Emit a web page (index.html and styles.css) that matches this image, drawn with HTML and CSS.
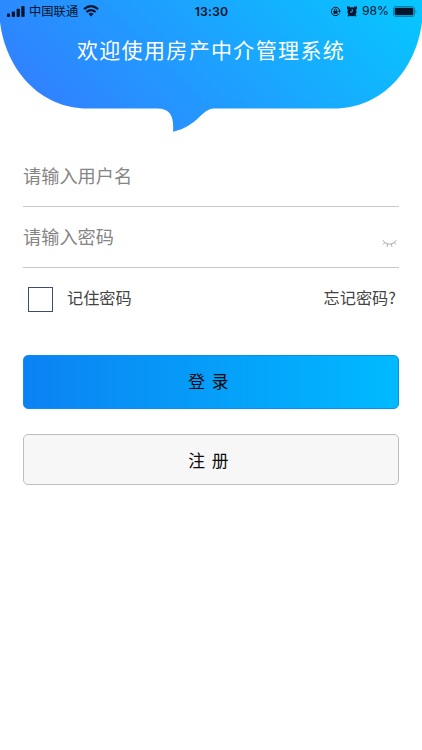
FILE: index.html
```html
<!DOCTYPE html>
<html lang="zh-CN">
<head>
<meta charset="utf-8">
<title>登录</title>
<link rel="stylesheet" href="styles.css">
</head>
<body>
<header class="hero">
  <svg class="hero-bg" width="422" height="132" viewBox="0 0 422 132" aria-hidden="true">
    <defs>
      <linearGradient id="sky" gradientUnits="userSpaceOnUse" x1="98" y1="154" x2="324" y2="-72">
        <stop offset="0" stop-color="#3082ff"/>
        <stop offset="1" stop-color="#08c4ff"/>
      </linearGradient>
    </defs>
    <path fill="url(#sky)" d="M0 0H422V22C416 70 382 108.5 334 108.5H214C202 108.5 198 126 173 131.8C174 117 171 108.5 157 108.5H88C40 108.5 6 70 0 22Z"/>
  </svg>
  <div class="status">
    <div class="status-left">
      <svg width="18" height="11" viewBox="0 0 18 11"><rect x="0" y="7.5" width="3" height="3.5" rx=".8"/><rect x="4.8" y="5.5" width="3.2" height="5.5" rx=".8"/><rect x="9.6" y="2.8" width="3.2" height="8.2" rx=".8"/><rect x="14.3" y="0" width="3.3" height="11" rx=".8"/></svg>
      <span class="carrier">中国联通</span>
      <svg width="16" height="12" viewBox="0 0 16 12" fill="none" stroke="#05152b" stroke-width="2.2"><path d="M1 4.2Q8-1.8 15 4.2M3.4 7Q8 3.1 12.6 7"/><path d="M5.5 8.9Q8 6.8 10.5 8.9L8 11.6Z" fill="#05152b" stroke="none"/></svg>
    </div>
    <div class="time">13:30</div>
    <div class="status-right">
      <svg width="11" height="11" viewBox="0 0 11 11"><path d="M9.2 7.5A4.2 4.2 0 1 1 9.7 5" fill="none" stroke="#05152b"/><path d="M8 4.8H11L9.5 6.8Z"/><rect x="3.5" y="4.8" width="4" height="3" rx=".4"/><path d="M4.4 5V4a1.1 1.1 0 0 1 2.2 0v1" fill="none" stroke="#05152b" stroke-width=".8"/></svg>
      <svg class="alarm" width="10" height="11" viewBox="0 0 10 11"><circle cx="5" cy="5.7" r="4.5"/><path d="M.8 3.2V1.3H2.8M9.2 3.2V1.3H7.2M2 9L1.2 10.2M8 9l.8 1.2" stroke="#05152b" stroke-width="1.8"/><path d="M5.2 3V6.1H3" fill="none" stroke="#2bb5ff" stroke-width=".9"/></svg>
      <span class="percent">98%</span>
      <svg width="24" height="11" viewBox="0 0 24 11"><rect x=".5" y=".5" width="21" height="10" rx="2.5" fill="none" stroke="#087eac"/><rect x="1.7" y="1.7" width="18.6" height="7.6" rx="1.2"/><path d="M22.6 3.8Q24.1 5.5 22.6 7.2Z" fill="#087eac"/></svg>
    </div>
  </div>
  <h1 class="title">欢迎使用房产中介管理系统</h1>
</header>
<main class="form">
  <div class="field">请输入用户名</div>
  <div class="field">
    <span>请输入密码</span>
    <svg class="eye" width="15" height="10" viewBox="0 0 15 10" fill="none" stroke="#aaa"><path d="M.8 1.2C3.5 6.4 11.5 6.4 14.2 1.2M2.7 3.6L1.2 5.5M5.7 5L5 7.8M9.3 5l.7 2.8M12.3 3.6l1.5 1.9"/></svg>
  </div>
  <div class="options">
    <label class="remember"><span class="box"></span><span class="label">记住密码</span></label>
    <span class="label">忘记密码?</span>
  </div>
  <button class="btn login">登 录</button>
  <button class="btn register">注 册</button>
</main>
</body>
</html>
```
FILE: styles.css
```css
* { box-sizing: border-box; }
body {
  margin: 0;
  height: 750px;
  background: #fff;
  font-family: "Noto Sans CJK SC", sans-serif;
  overflow: hidden;
}
svg { display: block; flex: none; }
.hero { position: relative; height: 145px; }
.hero-bg { position: absolute; inset: 0; }
.status {
  position: relative;
  display: grid;
  grid-template-columns: 1fr auto 1fr;
  align-items: center;
  height: 22px;
  padding: 0 6px 0 7px;
  color: #05152b;
  fill: #05152b;
  line-height: 22px;
}
.status-left, .status-right { display: flex; align-items: center; }
.status-left { padding-bottom: 1px; }
.status-right { justify-content: flex-end; margin-right: -1px; padding-bottom: 1px; }
.carrier { margin: 0 5px 0 4px; font-size: 12.3px; }
.time { font: 600 12.3px/22px Inter, sans-serif; letter-spacing: .1px; }
.alarm { margin: 0 5px 0 6px; }
.percent { margin-right: 4px; font: 12.2px/22px Inter, sans-serif; }
.title {
  position: relative;
  margin: 11px 0 0;
  color: #fff;
  font-size: 21px;
  font-weight: 400;
  line-height: 32px;
  letter-spacing: 1.35px;
  text-align: center;
}
.form { padding: 0 23px; }
.field {
  display: flex;
  align-items: center;
  justify-content: space-between;
  height: 61px;
  padding-bottom: 2px;
  border-bottom: 1px solid #c8c8c8;
  color: #858585;
  font-size: 18.2px;
}
.field:first-child { height: 62px; }
.eye { margin: 15px 2px 0 0; }
.options {
  display: flex;
  justify-content: space-between;
  align-items: center;
  height: 62px;
  padding: 0 3px 0 5px;
  color: #444;
  font-size: 16.2px;
}
.label { padding-bottom: 4px; }
.remember { display: flex; align-items: center; }
.box { width: 25px; height: 25px; margin: 1px 14px 0 0; border: 1px solid #3d4d6b; }
.btn {
  display: block;
  width: 100%;
  padding: 0 5px 2px 0;
  border-radius: 5px;
  color: #0a0a0a;
  font: 16.8px "Noto Sans CJK SC", sans-serif;
  word-spacing: 3px;
}
.login {
  height: 54px;
  margin-top: 25px;
  border: 1px solid #0a91ec;
  background: linear-gradient(90deg, #0b82f3, #00baff) border-box;
}
.register {
  height: 51px;
  margin-top: 25px;
  padding-bottom: 0;
  border: 1px solid #bdbdbd;
  background: #f7f7f7;
}
```
